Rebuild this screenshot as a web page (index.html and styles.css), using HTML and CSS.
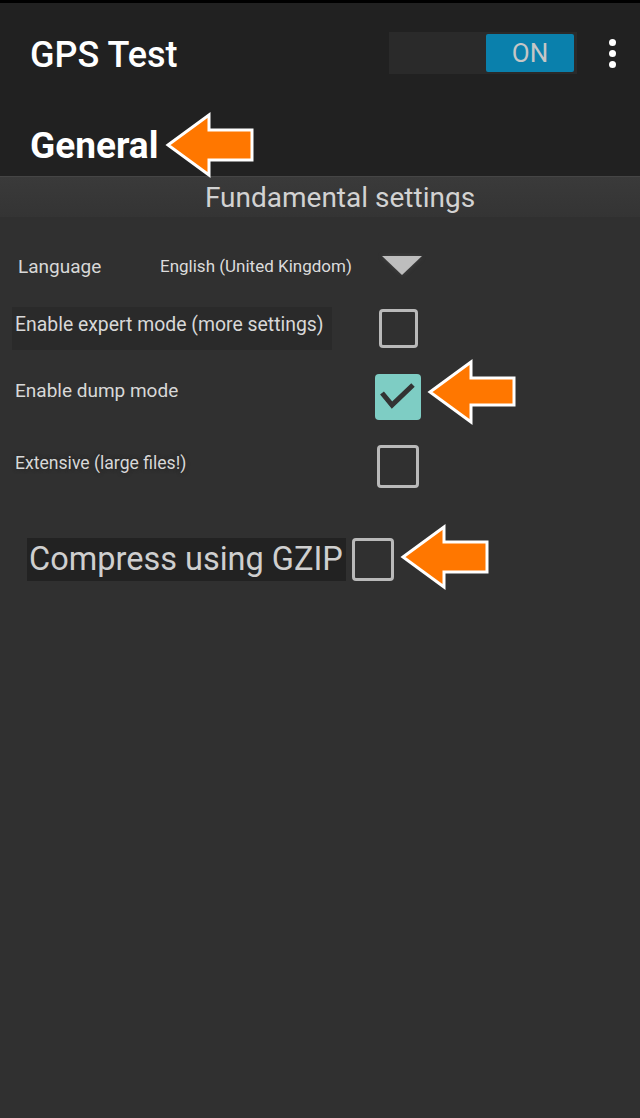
FILE: index.html
```html
<!DOCTYPE html>
<html lang="en">

<head>
    <meta charset="UTF-8">
    <meta name="viewport" content="width=device-width, initial-scale=1.0">
    <title>GPS Test</title>

    <link rel="stylesheet" href="styles.css">
</head>

<body>

    <div class="screen">
        <div class="statusbar"></div>

        <div class="appbar">
            <div class="title-row">
                <div class="app-title">GPS Test</div>
                <div class="toggle">
                    <div class="toggle-on">ON</div>
                </div>
                <div class="menu">
                    <span></span>
                    <span></span>
                    <span></span>
                </div>
            </div>
            <div class="page-title">General</div>
        </div>

        <div class="section-bar">Fundamental settings</div>

        <div class="settings">

            <div class="row row-language">
                <div class="lang-label">Language</div>
                <div class="lang-value">English (United Kingdom)</div>
                <svg class="dropdown" width="40" height="20" viewBox="0 0 40 20">
                    <polygon points="0,0 40,0 20,19" fill="#bdbdbd" />
                </svg>
            </div>

            <div class="row">
                <div class="label label-shaded">Enable expert mode (more settings)</div>
                <div class="check-cell">
                    <div class="checkbox box-small"></div>
                </div>
            </div>

            <div class="row row-tall">
                <div class="label label-raised">Enable dump mode</div>
                <div class="check-cell">
                    <div class="checkbox checked">
                        <svg width="46" height="46" viewBox="0 0 46 46">
                            <polyline points="7,19 17,31 38,11" fill="none" stroke="#333" stroke-width="5" />
                        </svg>
                    </div>
                </div>
            </div>

            <div class="row">
                <div class="label label-small label-blur">Extensive (large files!)</div>
                <div class="check-cell">
                    <div class="checkbox"></div>
                </div>
            </div>

            <div class="row row-gzip">
                <div class="gzip-label">Compress using GZIP</div>
                <div class="checkbox"></div>
            </div>

        </div>

        <!-- annotation arrows -->
        <svg class="arrow arrow-general" width="90" height="66" viewBox="0 0 90 66">
            <polygon points="3,33 44,3 44,18 87,18 87,48 44,48 44,63" />
        </svg>
        <svg class="arrow arrow-dump" width="90" height="66" viewBox="0 0 90 66">
            <polygon points="3,33 44,3 44,19 87,19 87,46 44,46 44,63" />
        </svg>
        <svg class="arrow arrow-gzip" width="90" height="66" viewBox="0 0 90 66">
            <polygon points="3,33 44,3 44,18 87,18 87,48 44,48 44,63" />
        </svg>
    </div>

</body>

</html>
```

FILE: styles.css
```css
body {
    margin: 0;
    background-color: #303030;
    font-family: Roboto, "Noto Sans", sans-serif;
    color: #d6d6d6;
}

.screen {
    position: relative;
    width: 640px;
    min-height: 1118px;
    background-color: #303030;
}

.statusbar {
    height: 3px;
    background-color: #000;
}

/* top bar */
.appbar {
    background-color: #212121;
    height: 173px;
}

.title-row {
    display: flex;
    align-items: center;
    height: 100px;
    padding-left: 30px;
}

.app-title {
    flex: 1;
    font-size: 36px;
    font-weight: 500;
    line-height: 40px;
    margin-top: 4px;
    color: #fff;
}

.toggle {
    display: flex;
    justify-content: flex-end;
    width: 185px;
    height: 38px;
    padding: 2px 3px 2px 0;
    background-color: #2a2a2a;
}

.toggle-on {
    width: 88px;
    height: 38px;
    line-height: 38px;
    text-align: center;
    background-color: #0a80ac;
    border-radius: 2px;
    font-size: 26px;
    color: #c6c6c6;
}

.menu {
    display: flex;
    flex-direction: column;
    gap: 4px;
    margin-left: 32px;
    margin-right: 24px;
}

.menu span {
    width: 7px;
    height: 7px;
    border-radius: 50%;
    background-color: #fff;
}

.page-title {
    padding: 23px 0 0 30px;
    font-size: 37px;
    font-weight: bold;
    line-height: 40px;
    color: #fff;
}

/* section header */
.section-bar {
    height: 38px;
    padding: 2px 0 0 40px;
    border-top: 1px solid #454545;
    background: linear-gradient(#3a3a3a, #343434);
    text-align: center;
    font-size: 28px;
    line-height: 38px;
    color: #d2d2d2;
}

/* settings list */
.settings {
    padding-top: 18px;
}

.row {
    display: flex;
    align-items: center;
    height: 62px;
    padding-left: 15px;
}

.row-tall {
    height: 76px;
}

.row-language {
    padding-left: 18px;
}

.lang-label {
    width: 142px;
    font-size: 19px;
    color: #d8d8d8;
}

.lang-value {
    width: 222px;
    font-size: 17px;
    color: #dcdcdc;
}

.dropdown {
    filter: drop-shadow(0 0 2px #444);
}

.label {
    width: 360px;
    font-size: 19px;
    color: #d8d8d8;
}

.label-small {
    font-size: 17.6px;
    padding-bottom: 6px;
}

.label-raised {
    padding-bottom: 14px;
}

.label-shaded {
    box-sizing: border-box;
    width: 320px;
    margin-right: 43px;
    margin-left: -3px;
    padding: 6px 0 14px 3px;
    background-color: #2a2a2a;
    font-size: 19.4px;
}

.label-blur {
    text-shadow: 0 0 4px #222;
}

.check-cell {
    display: flex;
    justify-content: center;
    width: 46px;
}

.checkbox {
    box-sizing: border-box;
    width: 42px;
    height: 43px;
    border: 3px solid #b9b9b9;
    border-radius: 4px;
    background-color: #303030;
}

.box-small {
    width: 39px;
    height: 39px;
}

.checkbox.checked {
    width: 46px;
    height: 46px;
    border: none;
    background-color: #7ecdc4;
}

.checkbox.checked svg {
    display: block;
}

.row-gzip {
    height: 46px;
    margin-top: 39px;
    padding-left: 27px;
    gap: 6px;
}

.gzip-label {
    padding: 0 3px 0 2px;
    height: 43px;
    line-height: 43px;
    background-color: #222;
    font-size: 32.5px;
    color: #cfcfcf;
}

/* annotation arrows */
.arrow {
    position: absolute;
}

.arrow polygon {
    fill: #ff7700;
    stroke: #fff;
    stroke-width: 3;
}

.arrow-general {
    left: 165px;
    top: 112px;
}

.arrow-dump {
    left: 427px;
    top: 359px;
}

.arrow-gzip {
    left: 400px;
    top: 524px;
}
```
